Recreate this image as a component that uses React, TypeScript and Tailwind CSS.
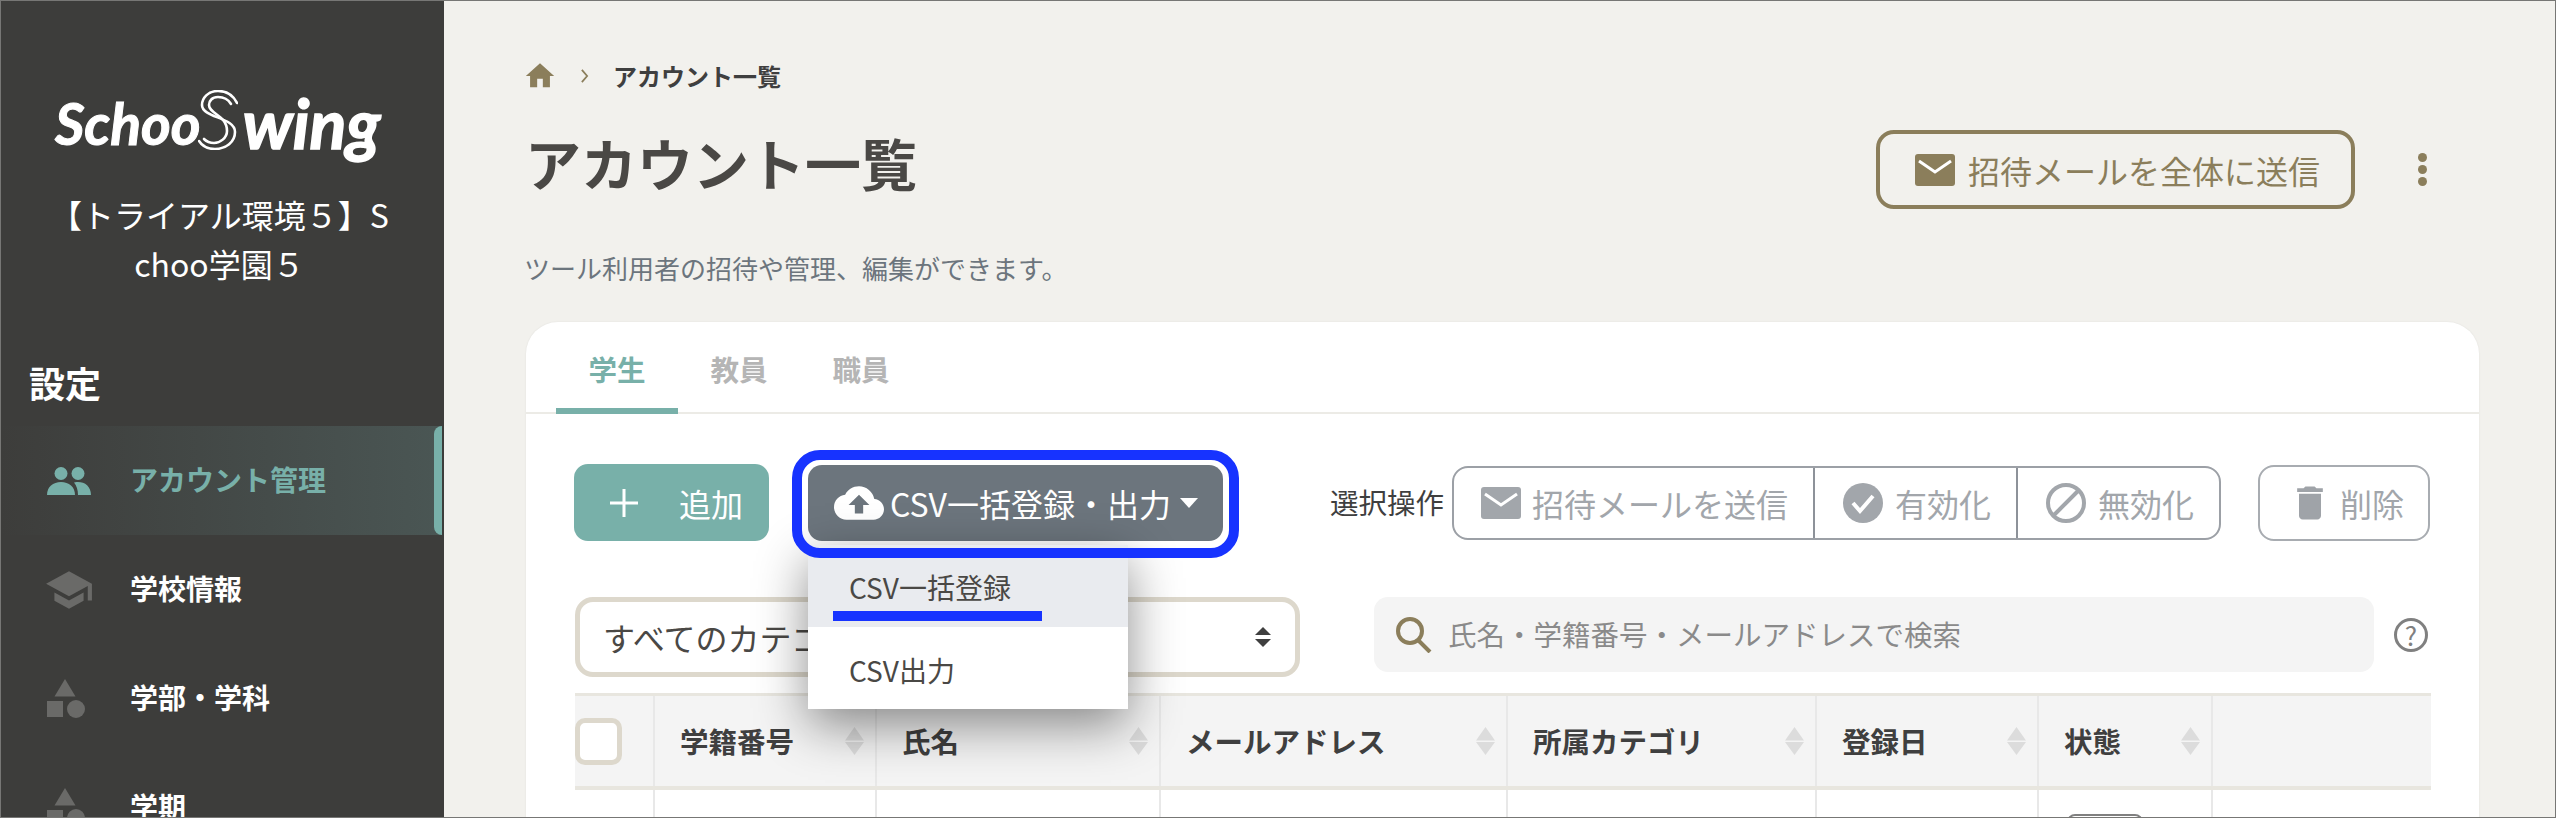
import { MdCloudUpload, MdDelete, MdHome, MdSchool } from 'react-icons/md'

const navItems = [
  { label: 'アカウント管理', icon: 'people', active: true },
  { label: '学校情報', icon: 'school' },
  { label: '学部・学科', icon: 'shapes' },
  { label: '学期', icon: 'shapes' },
]

const columns = [
  { label: '学籍番号', width: 'w-[222px]' },
  { label: '氏名', width: 'w-[284px]' },
  { label: 'メールアドレス', width: 'w-[347px]' },
  { label: '所属カテゴリ', width: 'w-[309px]' },
  { label: '登録日', width: 'w-[222px]' },
  { label: '状態', width: 'w-[174px]' },
]

const PeopleIcon = () => (
  <svg viewBox="0 0 44 28" className="h-[28px] w-[44px] fill-[#78b0a9]">
    <circle cx="14" cy="6.5" r="6.5" />
    <circle cx="31" cy="6.5" r="6.5" />
    <path d="M0 28c0-8 6-13 14-13s14 5 14 13z" />
    <path d="M27 15.5c2-.5 3-.5 4-.5 7 0 13 4.500 13 13H31c0-5-1.500-9.500-4-12.500z" />
  </svg>
)

const ShapesIcon = () => (
  <svg viewBox="0 0 38 40" className="h-[40px] w-[38px] fill-[#6a6a68]">
    <path d="M18 0l10.500 17.500h-21z" />
    <rect x="0" y="22" width="16" height="16" />
    <circle cx="29" cy="30" r="9" />
  </svg>
)

const MailIcon = ({ className }: { className: string }) => (
  <svg viewBox="0 0 40 32" className={className}>
    <rect width="40" height="32" rx="3" fill="currentColor" />
    <path d="M4 7l16 11L36 7" fill="none" stroke="#fff" strokeWidth="3" />
  </svg>
)

const SortIcon = () => (
  <svg viewBox="0 0 19 28" className="h-[28px] w-[19px] shrink-0 fill-[#dcdcdc]">
    <path d="M9.500 0L19 13.500H0z" />
    <path d="M0 15h19L9.500 28z" />
  </svg>
)

const Logo = () => (
  <div className="flex h-[60px] items-start pl-[54px] font-['Lato',sans-serif] leading-[60px] text-white italic">
    <span className="mt-[3px] text-[57px] font-bold [-webkit-text-stroke:1px_#fff]">Schoo</span>
    <svg viewBox="0 0 40 60" className="-ml-[3px] h-[60px] w-[40px] shrink-0 fill-none stroke-white" strokeWidth="2.600" strokeLinecap="round">
      <path d="M39 13C34 3 26 1 20 1 10 1 4 8 4 15c0 13 33 12 33 27 0 10-9 17-20 17-7 0-13-3-16-8" />
      <path d="M33 14c-3-5-8-7-13-7-6 0-9 4-9 8 0 9 18 10 18 26 0 7-7 12-13 12-4 0-7-1-10-4" />
    </svg>
    <span className="mt-[3px] ml-[5px] text-[68px] font-bold [-webkit-text-stroke:1.500px_#fff]">wing</span>
  </div>
)

const Sidebar = () => (
  <aside className="w-[443px] shrink-0 bg-[#3d3d3b] pr-[2px] text-white">
    <div className="pt-[89px]">
      <Logo />
    </div>
    <p className="mt-[40px] ml-[46px] w-[345px] text-center text-[32px] leading-[49px] break-all">【トライアル環境５】Schoo学園５</p>
    <h2 className="mt-[69px] pl-[28px] text-[36px] leading-[50px] font-bold">設定</h2>
    <nav className="mt-[19px]">
      {navItems.map((item) => (
        <div
          key={item.label}
          className={
            item.active
              ? 'relative flex h-[109px] items-center bg-gradient-to-r from-[#3d3d3b] to-[#4a5654] pl-[46px] text-[#78b0a9]'
              : 'relative flex h-[109px] items-center pl-[46px]'
          }
        >
          <div className="flex w-[83px] items-center">
            {item.icon === 'people' && <PeopleIcon />}
            {item.icon === 'school' && <MdSchool className="h-[50px] w-[50px] -translate-x-[3px] text-[#6a6a68]" />}
            {item.icon === 'shapes' && <ShapesIcon />}
          </div>
          <span className="pb-[3px] text-[28px] font-bold">{item.label}</span>
          {item.active && <span className="absolute top-0 right-0 bottom-0 w-[8px] rounded-l-lg bg-[#78b0a9]" />}
        </div>
      ))}
    </nav>
  </aside>
)

const Toolbar = () => (
  <div className="mt-[50px] flex items-center pl-[48px]">
    <button className="flex h-[77px] w-[195px] items-center rounded-[14px] bg-[#78b0a9] pl-[36px] text-[32px] text-white">
      <svg viewBox="0 0 28 28" className="h-[28px] w-[28px] stroke-white" strokeWidth="3">
        <path d="M14 0v28M0 14h28" />
      </svg>
      <span className="ml-[41px]">追加</span>
    </button>
    <div className="relative ml-[39px]">
      <button className="flex h-[76px] w-[415px] items-center rounded-[14px] bg-[#6c757d] pl-[26px] text-[32px] whitespace-nowrap text-white">
        <MdCloudUpload className="h-[52px] w-[50px] shrink-0" />
        <span className="ml-[6px]">CSV一括登録・出力</span>
        <svg viewBox="0 0 18 10" className="ml-[9px] h-[10px] w-[18px] fill-white">
          <path d="M0 0h18L9 10z" />
        </svg>
      </button>
      <div className="absolute top-[80px] left-0 z-10 w-[320px] bg-white text-[28px] text-[#4a4845] shadow-[0_16px_48px_rgba(0,0,0,0.45)]">
        <div className="relative h-[82px] bg-[#e9ebef] pt-[20px] pl-[41px] leading-[44px]">
          CSV一括登録
          <span className="absolute top-[66px] left-[25px] h-[10px] w-[209px] bg-[#1733ff]" />
        </div>
        <div className="h-[82px] pt-[21px] pl-[41px] leading-[44px]">CSV出力</div>
      </div>
      <span className="pointer-events-none absolute -top-[15px] -right-[16px] -bottom-[17px] -left-[16px] z-20 rounded-[28px] border-[10px] border-[#1733ff]" />
    </div>
    <span className="ml-[107px] text-[28.500px] text-[#3f3f3f]">選択操作</span>
    <div className="ml-[8px] flex h-[74px] w-[769px] rounded-[16px] border-2 border-[#9ca0a6] text-[32px] text-[#a2a6ab]">
      <div className="flex w-[361px] items-center border-r-2 border-[#8d9299] pl-[27px]">
        <MailIcon className="h-[32px] w-[40px]" />
        <span className="ml-[11px]">招待メールを送信</span>
      </div>
      <div className="flex w-[203px] items-center border-r-2 border-[#8d9299] pl-[28px]">
        <svg viewBox="0 0 40 40" className="h-[40px] w-[40px]">
          <circle cx="20" cy="20" r="20" fill="currentColor" />
          <path d="M10 20l7 8 13-15" fill="none" stroke="#fff" strokeWidth="4" />
        </svg>
        <span className="ml-[12px]">有効化</span>
      </div>
      <div className="flex flex-1 items-center pl-[28px]">
        <svg viewBox="0 0 40 40" className="h-[40px] w-[40px] fill-none stroke-current" strokeWidth="4">
          <circle cx="20" cy="20" r="18" />
          <path d="M32 8L8 32" />
        </svg>
        <span className="ml-[12px]">無効化</span>
      </div>
    </div>
    <button className="mr-[49px] ml-auto flex h-[76px] w-[172px] items-center rounded-[16px] border-2 border-[#a8acb1] pl-[30px] text-[32px] text-[#a2a6ab]">
      <MdDelete className="-ml-[2px] h-[44px] w-[44px] shrink-0 fill-[#9fa3a8]" />
      <span className="ml-[8px]">削除</span>
    </button>
  </div>
)

const Filters = () => (
  <div className="mt-[56px] flex pl-[49px]">
    <div className="flex h-[80px] w-[725px] items-center rounded-[18px] border-[5px] border-[#ddd8cc] pr-[23px] pl-[23px] text-[32px] text-[#4a4845]">
      <span>すべてのカテゴリ</span>
      <span className="ml-[75px]">すべての状態</span>
      <svg viewBox="0 0 18 20" className="ml-auto h-[20px] w-[18px] fill-[#3f3f3f]">
        <path d="M9 0l8 8H1zM1 12h16l-8 8z" />
      </svg>
    </div>
    <div className="ml-[74px] flex h-[75px] w-[1000px] items-center rounded-[14px] bg-[#f4f4f4] pl-[22px] text-[28.500px] text-[#8a8a8a]">
      <svg viewBox="0 0 36 36" className="h-[36px] w-[36px] fill-none stroke-[#8b7e5b]" strokeWidth="4">
        <circle cx="14" cy="14" r="12" />
        <path d="M22 23l12 12" />
      </svg>
      <span className="ml-[16px]">氏名・学籍番号・メールアドレスで検索</span>
    </div>
    <div className="mt-[21px] ml-[20px] flex h-[34px] w-[34px] items-center justify-center rounded-full border-[3px] border-[#808080] text-[26px] leading-none text-[#808080]">
      ?
    </div>
  </div>
)

const Table = () => (
  <div className="mx-[48px] mt-[16px] ml-[49px]">
    <div className="flex h-[97px] border-t-[3px] border-b-[4px] border-[#e8e6df] bg-[#f4f4f4]">
      <div className="flex w-[80px] items-center border-r-2 border-[#e8e8e8]">
        <span className="h-[47px] w-[47px] rounded-[10px] border-[5px] border-[#ddd8cc] bg-white" />
      </div>
      {columns.map((col) => (
        <div key={col.label} className={`flex ${col.width} items-center justify-between border-r-2 border-[#e8e8e8] pr-[11px] pl-[25px] text-[28.500px] font-bold text-[#3f3f3f]`}>
          <span>{col.label}</span>
          <SortIcon />
        </div>
      ))}
    </div>
    <div className="flex h-[60px]">
      <div className="w-[80px] border-r-2 border-[#e8e8e8]" />
      {columns.map((col) => (
        <div key={col.label} className={`${col.width} border-r-2 border-[#e8e8e8] pt-[24px]`}>
          {col.label === '状態' && <div className="ml-[28px] h-[40px] w-[76px] rounded-[8px] border-2 border-[#808080]" />}
        </div>
      ))}
    </div>
  </div>
)

export default function App() {
  return (
    <div className="flex h-[818px] w-full overflow-hidden border border-[#777775] bg-[#f2f1ed] font-['Noto_Sans_CJK_JP','Noto_Sans',sans-serif]">
      <Sidebar />
      <main className="min-w-0 flex-1 pr-[76px] pl-[82px]">
        <div className="flex items-center pt-[57px] text-[#8b7e5b]">
          <MdHome className="h-[34px] w-[34px] -translate-x-[3px]" />
          <svg viewBox="0 0 10 16" className="ml-[20px] h-[14px] w-[9px] fill-none stroke-current" strokeWidth="2">
            <path d="M2 1l6 7-6 7" />
          </svg>
          <span className="ml-[24px] text-[24px] leading-[36px] font-bold text-[#3f3f3f]">アカウント一覧</span>
        </div>
        <div className="flex items-start justify-between">
          <h1 className="mt-[28px] -ml-[1px] text-[56px] leading-[80px] font-bold text-[#4a4845]">アカウント一覧</h1>
          <div className="mt-[36px] flex items-center">
            <button className="flex h-[79px] w-[479px] items-center rounded-[18px] border-4 border-[#8b7e5b] pl-[35px] text-[32px] text-[#8b7e5b]">
              <MailIcon className="h-[32px] w-[40px]" />
              <span className="ml-[13px] whitespace-nowrap">招待メールを全体に送信</span>
            </button>
            <div className="mr-[52px] ml-[63px] flex flex-col gap-[3px]">
              <span className="h-[9px] w-[9px] rounded-full bg-[#8b7e5b]" />
              <span className="h-[9px] w-[9px] rounded-full bg-[#8b7e5b]" />
              <span className="h-[9px] w-[9px] rounded-full bg-[#8b7e5b]" />
            </div>
          </div>
        </div>
        <p className="mt-[39px] -ml-[2px] text-[26px] leading-[40px] text-[#6c757d]">ツール利用者の招待や管理、編集ができます。</p>
        <section className="mt-[34px] h-[600px] rounded-t-[32px] bg-white shadow-[0_0_2px_rgba(0,0,0,0.08)]">
          <div className="flex h-[92px] border-b-2 border-[#ecebe6] pl-[30px] text-[28.500px] font-bold text-[#b5b5b5]">
            <div className="flex h-[92px] w-[122px] items-center justify-center border-b-[6px] border-[#78b0a9] pt-[8px] text-[#78b0a9]">学生</div>
            <div className="flex h-[92px] w-[122px] items-center justify-center pt-[2px]">教員</div>
            <div className="flex h-[92px] w-[122px] items-center justify-center pt-[2px]">職員</div>
          </div>
          <Toolbar />
          <Filters />
          <Table />
        </section>
      </main>
    </div>
  )
}
